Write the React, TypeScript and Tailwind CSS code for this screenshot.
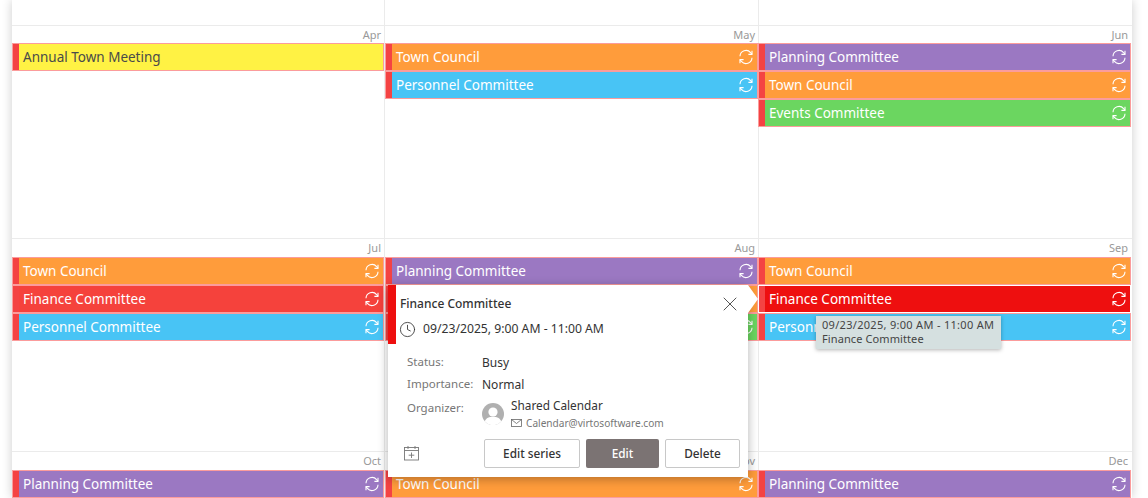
import { Clock, X } from "lucide-react";

const font = "font-['Noto_Sans',sans-serif]";

type EventProps = {
  title: string;
  color: string;
  recurring?: boolean;
};

const SyncIcon = () => (
  <svg width="16" height="16" viewBox="0 0 16 16" fill="none" stroke="white" strokeWidth="1.1" className="shrink-0">
    <path d="M2 7.2A6 6 0 0 1 12.6 3.6L14 5.2" />
    <path d="M14 1.8v3.6h-3.6" />
    <path d="M14 8.8A6 6 0 0 1 3.4 12.4L2 10.8" />
    <path d="M2 14.2v-3.6h3.6" />
  </svg>
);

const Event = ({ title, color, recurring = true }: EventProps) => (
  <div className={`flex h-[28px] items-center border border-[#fb9c9c] ${color}`}>
    <div className="h-full w-[6px] shrink-0 bg-[#f44343]" />
    <span className="flex-1 pl-[4px] text-[13.5px] text-white">{title}</span>
    {recurring && <div className="pr-[3px]"><SyncIcon /></div>}
  </div>
);

const orange = "bg-[#ff9c3b]";
const purple = "bg-[#9b78c2]";
const blue = "bg-[#48c4f5]";
const green = "bg-[#6bd660]";
const red = "bg-[#f5423c]";

type MonthProps = {
  label: string;
  children?: React.ReactNode;
  last?: boolean;
  labelHeight?: string;
};

const Month = ({ label, children, last, labelHeight = "h-[18px]" }: MonthProps) => (
  <div className={last ? "-ml-px mr-px" : "border-r border-[#ebebeb]"}>
    <div className={`${labelHeight} pr-[3px] text-right text-[11px] leading-[17px] text-[#999999]`}>{label}</div>
    {children}
  </div>
);

const Row = ({ name, value }: { name: string; value: string }) => (
  <div className="flex h-[22px] items-center">
    <span className="-mt-[2px] w-[75px] text-[11.5px] text-[#767676]">{name}</span>
    <span className="text-[12px] text-[#333333]">{value}</span>
  </div>
);

export default function App() {
  return (
    <div className={`${font} h-[498px] w-[1148px] overflow-hidden bg-white`}>
      <div className="relative ml-[12px] h-[498px] w-[1120px] bg-white shadow-[0_0_10px_rgba(0,0,0,0.2)]">
        <div className="grid h-[26px] grid-cols-[373px_374px_373px] border-b border-[#ebebeb]">
          <div className="border-r border-[#ebebeb]" />
          <div className="border-r border-[#ebebeb]" />
          <div />
        </div>

        <div className="grid h-[213px] grid-cols-[373px_374px_373px] border-b border-[#ebebeb]">
          <Month label="Apr" labelHeight="h-[17px]">
            <Event title="Annual Town Meeting" color="bg-[#fff244] [&>span]:text-[#4a4a4a]" recurring={false} />
          </Month>
          <Month label="May" labelHeight="h-[17px]">
            <Event title="Town Council" color={orange} />
            <Event title="Personnel Committee" color={blue} />
          </Month>
          <Month label="Jun" labelHeight="h-[17px]" last>
            <Event title="Planning Committee" color={purple} />
            <Event title="Town Council" color={orange} />
            <Event title="Events Committee" color={green} />
          </Month>
        </div>

        <div className="grid h-[213px] grid-cols-[373px_374px_373px] border-b border-[#ebebeb]">
          <Month label="Jul">
            <Event title="Town Council" color={orange} />
            <Event title="Finance Committee" color={red} />
            <Event title="Personnel Committee" color={blue} />
          </Month>
          <Month label="Aug">
            <Event title="Planning Committee" color={purple} />
            <Event title="Town Council" color={orange} />
            <Event title="Events Committee" color={green} />
          </Month>
          <Month label="Sep" last>
            <Event title="Town Council" color={orange} />
            <div className="flex h-[28px] items-center border border-white bg-[#ee0f0f]">
              <div className="h-full w-[6px] shrink-0 bg-[#f44343]" />
              <span className="flex-1 pl-[4px] text-[13.5px] text-white">Finance Committee</span>
              <div className="pr-[3px]"><SyncIcon /></div>
            </div>
            <Event title="Personnel Committee" color={blue} />
          </Month>
        </div>

        <div className="grid h-[46px] grid-cols-[373px_374px_373px]">
          <Month label="Oct">
            <Event title="Planning Committee" color={purple} />
          </Month>
          <Month label="Nov">
            <Event title="Town Council" color={orange} />
          </Month>
          <Month label="Dec" last>
            <Event title="Planning Committee" color={purple} />
          </Month>
        </div>

        {/* event popup */}
        <div className="absolute left-[376px] top-[285px] h-[192px] w-[360px] bg-white shadow-[0_2px_10px_rgba(0,0,0,0.3)]">
          <div className="absolute left-full top-0 h-0 w-0 border-y-[14px] border-l-[10px] border-y-transparent border-l-white" />
          <div className="absolute left-0 top-0 h-[59px] w-[8px] bg-[#ee0f0f]" />
          <div className="pl-[12px] pr-[8px]">
            <div className="flex h-[37px] items-center justify-between pt-[1px]">
              <span className="text-[12px] font-medium text-[#333333]">Finance Committee</span>
              <X size={24} strokeWidth={1} className="-mr-[2px] text-[#555555]" />
            </div>
            <div className="flex h-[14px] items-center gap-[7px] text-[12.2px] text-[#333333]">
              <Clock size={17} strokeWidth={1.2} className="-ml-[1px]" />
              09/23/2025, 9:00 AM - 11:00 AM
            </div>
            <div className="pl-[7px] pt-[16px]">
              <Row name="Status:" value="Busy" />
              <Row name="Importance:" value="Normal" />
              <div className="mt-[1px] flex">
                <span className="w-[75px] pt-[2px] text-[11.5px] text-[#767676]">Organizer:</span>
                <div className="flex gap-[7px]">
                  <svg width="22" height="22" viewBox="0 0 22 22" className="mt-[6px]">
                    <circle cx="11" cy="11" r="11" fill="#b0b0b0" />
                    <circle cx="11" cy="9" r="4.6" fill="white" />
                    <path d="M2.8 18.5C4 14.8 7.4 13.8 11 13.8s7 1 8.2 4.7A11 11 0 0 1 2.8 18.5z" fill="white" />
                  </svg>
                  <div>
                    <div className="text-[11.8px] leading-[17px] text-[#333333]">Shared Calendar</div>
                    <div className="flex items-center gap-[4px] text-[10.1px] leading-[18px] text-[#767676]">
                      <svg width="11" height="8" viewBox="0 0 11 8" fill="none" stroke="#666666" strokeWidth="0.8">
                        <rect x="0.5" y="0.5" width="10" height="7" />
                        <path d="M0.5 0.5l5 4 5-4" />
                      </svg>
                      Calendar@virtosoftware.com
                    </div>
                  </div>
                </div>
              </div>
            </div>
            <div className="mt-[7px] flex items-center">
              <svg width="15" height="15" viewBox="0 0 15 15" fill="none" stroke="#777777" strokeWidth="0.9" className="ml-[4px]">
                <rect x="0.5" y="1.5" width="14" height="12.5" />
                <path d="M0.5 4.5h14M4 0v3M11 0v3M7.5 6.5v5.5M4.7 9.2h5.6" />
              </svg>
              <div className="ml-auto flex gap-[6px] text-[11.8px] font-medium">
                <button className="h-[29px] w-[96px] rounded-[2px] border border-[#c8c8c8] text-[#333333]">Edit series</button>
                <button className="h-[29px] w-[73px] rounded-[2px] bg-[#7b7373] text-white">Edit</button>
                <button className="h-[29px] w-[75px] rounded-[2px] border border-[#c8c8c8] text-[#333333]">Delete</button>
              </div>
            </div>
          </div>
        </div>

        {/* hover tooltip */}
        <div className="absolute left-[804px] top-[316px] h-[33px] w-[185px] bg-[#d5e0e0] pl-[6px] pt-[2px] text-[11px] leading-[14px] text-[#444444] shadow-[0_1px_4px_rgba(0,0,0,0.3)]">
          <div className="tracking-[0.3px]">09/23/2025, 9:00 AM - 11:00 AM</div>
          <div className="tracking-[0.1px]">Finance Committee</div>
        </div>
      </div>
    </div>
  );
}
